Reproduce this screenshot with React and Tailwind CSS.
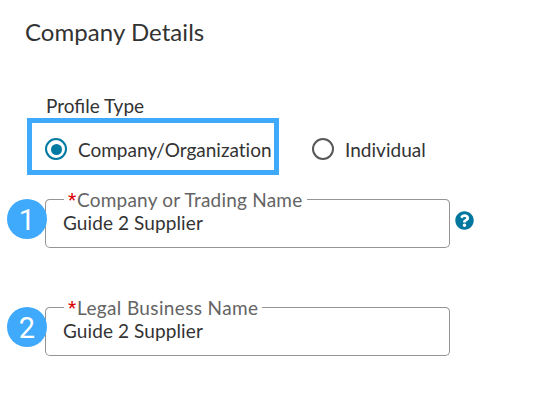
function StepBadge({ number }) {
  return (
    <span className="absolute -left-[38px] top-0 flex size-10 items-center justify-center rounded-full bg-[#3fa9fb] pt-[3px] font-['Roboto',sans-serif] text-[29px] leading-none text-white">
      {number}
    </span>
  );
}

function RadioOption({ label, checked, labelClass }) {
  return (
    <label className="flex items-center gap-[11px]">
      <span
        className={`flex size-[22px] shrink-0 items-center justify-center rounded-full border-2 ${
          checked ? 'border-[#0079a3]' : 'border-[#585858]'
        }`}
      >
        {checked && <span className="size-[11px] rounded-full bg-[#0079a3]" />}
      </span>
      <span className={`pt-0.5 text-[19px] leading-6 whitespace-nowrap ${labelClass}`}>{label}</span>
    </label>
  );
}

function HelpIcon() {
  return (
    <svg viewBox="0 0 512 512" className="mb-1.5 size-[19px]" fill="#00779f">
      <path d="M504 256c0 137-111 248-248 248S8 393 8 256C8 119.100 119 8 256 8s248 111.100 248 248zM262.700 90c-54.500 0-89.300 23-116.500 63.800-3.500 5.300-2.400 12.400 2.700 16.300l34.700 26.300c5.200 3.900 12.600 3 16.700-2.100 17.900-22.700 30.100-35.800 57.300-35.800 20.400 0 45.700 13.100 45.700 33 0 15-12.400 22.700-32.500 34C247.100 238.500 216 255 216 296v4c0 6.600 5.400 12 12 12h56c6.600 0 12-5.400 12-12v-1.300c0-28.700 84-29.900 84-107.700C380 132.400 319.300 90 262.700 90zM256 338c-25.400 0-46 20.600-46 46s20.600 46 46 46 46-20.600 46-46-20.600-46-46-46z" />
    </svg>
  );
}

function Field({ step, label, value, labelClass, help }) {
  return (
    <div className="relative flex h-[49px] items-center gap-[5px]">
      <div className="flex h-[49px] w-[405px] flex-col rounded-[5px] border border-t-0 border-[#949494]">
        {/* top edge is broken by the label */}
        <div className="-mx-px flex h-px items-center">
          <span className="h-[5px] w-[19px] shrink-0 self-start rounded-tl-[5px] border-t border-[#949494]" />
          <span
            className={`flex shrink-0 items-center pl-1 text-[19px] leading-6 whitespace-nowrap text-[#646464] ${labelClass}`}
          >
            <span className="w-[9px] font-['Roboto',sans-serif] tracking-normal text-[#d90000]">*</span>
            <span className="pt-px">{label}</span>
          </span>
          <span className="h-[5px] flex-1 self-start rounded-tr-[5px] border-t border-[#949494]" />
        </div>
        <span className="mt-[11px] pl-[17px] text-[19px] leading-6 tracking-[0.1px]">{value}</span>
      </div>
      {help && <HelpIcon />}
      <StepBadge number={step} />
    </div>
  );
}

export default function App() {
  return (
    <div className="h-[406px] w-[542px] overflow-hidden bg-white pt-4 pl-[25px] font-['Lato',sans-serif] text-[#333333]">
      <h1 className="text-2xl leading-8 tracking-[0.05px]">Company Details</h1>

      <div className="mt-[46px] pl-5">
        <p className="pl-px text-[19px] leading-6">Profile Type</p>

        <div className="-ml-[18px] flex items-center">
          <div className="flex h-[57px] w-[252px] items-center border-5 border-[#3fa9fb] pt-[5px] pl-[13px]">
            <RadioOption label="Company/Organization" checked labelClass="tracking-[-0.01px]" />
          </div>
          <div className="pt-[5px] pl-[33px]">
            <RadioOption label="Individual" labelClass="tracking-[0.03px]" />
          </div>
        </div>

        <div className="mt-6 flex flex-col gap-[59px]">
          <Field
            step={1}
            label="Company or Trading Name"
            value="Guide 2 Supplier"
            labelClass="w-[243px] tracking-[0.22px]"
            help
          />
          <Field
            step={2}
            label="Legal Business Name"
            value="Guide 2 Supplier"
            labelClass="w-[198px] tracking-[0.36px]"
          />
        </div>
      </div>
    </div>
  );
}
